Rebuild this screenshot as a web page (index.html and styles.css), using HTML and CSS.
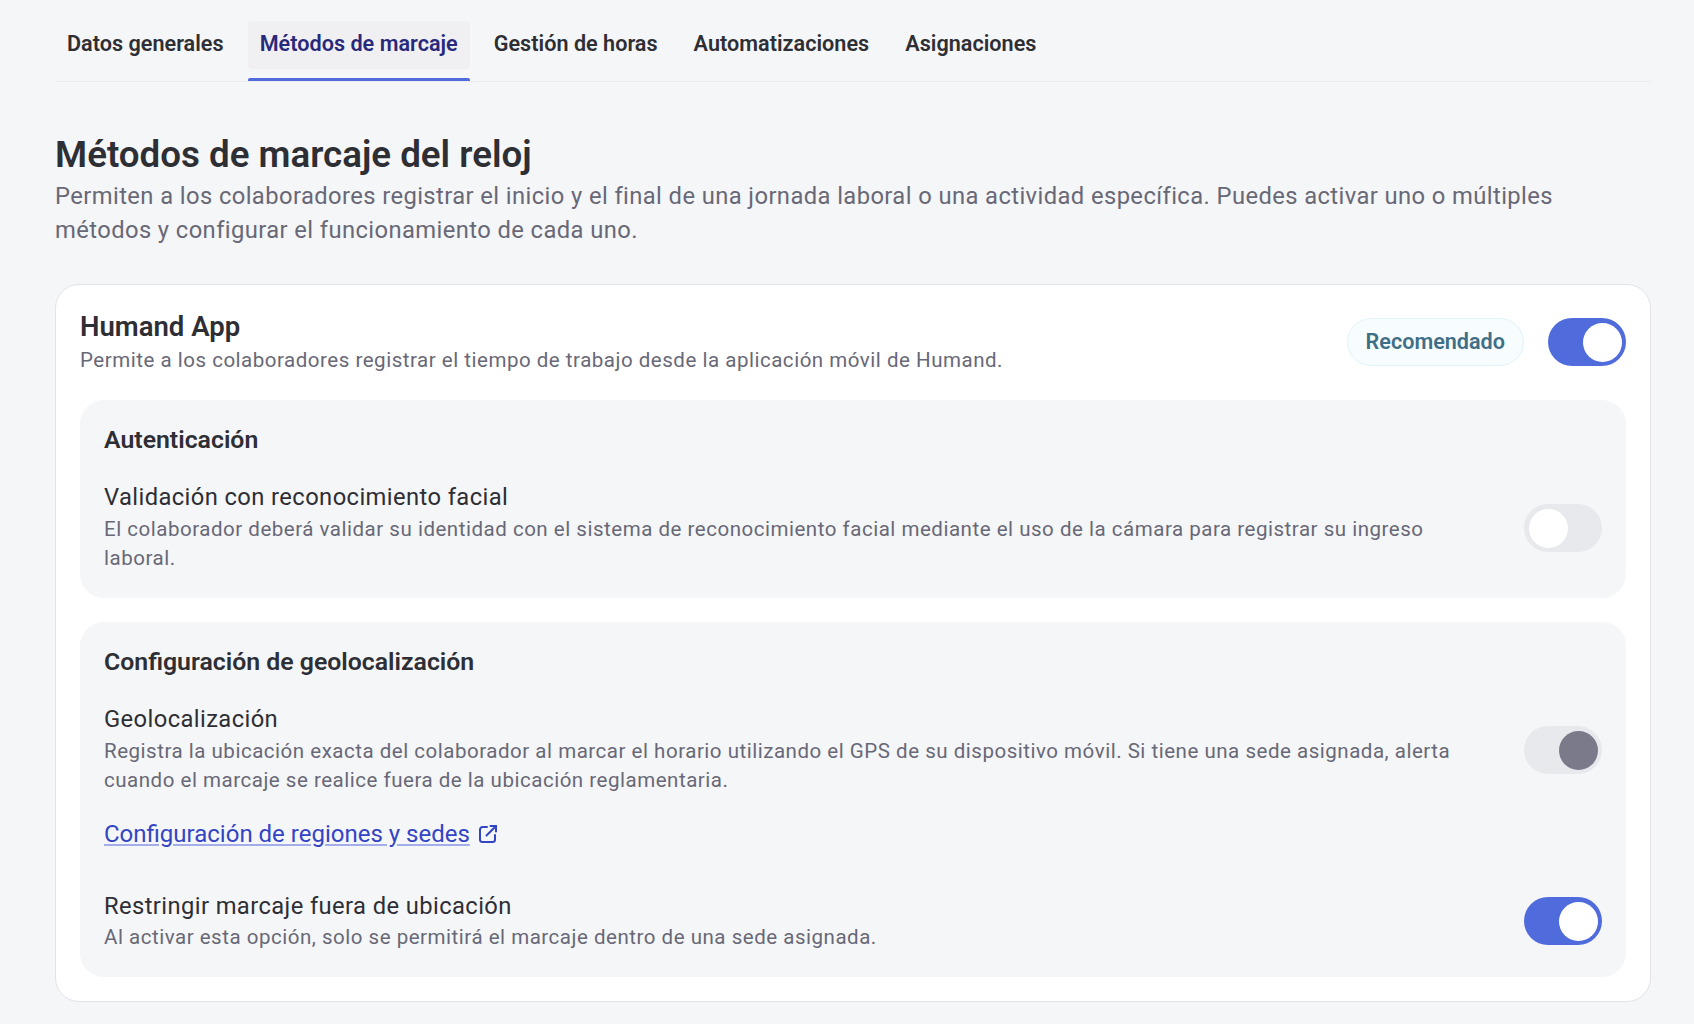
FILE: index.html
```html
<!DOCTYPE html>
<html lang="es">
<head>
<meta charset="utf-8">
<title>Métodos de marcaje</title>
<link rel="stylesheet" href="styles.css">
</head>
<body>
<main class="page">
  <nav class="tabs">
    <div class="tab"><a class="tab-label">Datos generales</a></div>
    <div class="tab tab-active"><a class="tab-label">Métodos de marcaje</a></div>
    <div class="tab"><a class="tab-label">Gestión de horas</a></div>
    <div class="tab"><a class="tab-label">Automatizaciones</a></div>
    <div class="tab"><a class="tab-label">Asignaciones</a></div>
  </nav>
  <header class="intro">
    <h1 class="title">Métodos de marcaje del reloj</h1>
    <p class="lead">Permiten a los colaboradores registrar el inicio y el final de una jornada laboral o una actividad específica. Puedes activar uno o múltiples métodos y configurar el funcionamiento de cada uno.</p>
  </header>
  <section class="card">
    <div class="card-head">
      <div class="card-head-text">
        <h2 class="card-title">Humand App</h2>
        <p class="desc">Permite a los colaboradores registrar el tiempo de trabajo desde la aplicación móvil de Humand.</p>
      </div>
      <span class="badge">Recomendado</span>
      <span class="switch switch-on"><span class="knob"></span></span>
    </div>
    <div class="panel">
      <h3 class="panel-title">Autenticación</h3>
      <div class="setting">
        <div class="setting-text">
          <div class="setting-name">Validación con reconocimiento facial</div>
          <p class="desc">El colaborador deberá validar su identidad con el sistema de reconocimiento facial mediante el uso de la cámara para registrar su ingreso laboral.</p>
        </div>
        <span class="switch"><span class="knob"></span></span>
      </div>
    </div>
    <div class="panel">
      <h3 class="panel-title">Configuración de geolocalización</h3>
      <div class="setting">
        <div class="setting-text">
          <div class="setting-name">Geolocalización</div>
          <p class="desc">Registra la ubicación exacta del colaborador al marcar el horario utilizando el GPS de su dispositivo móvil. Si tiene una sede asignada, alerta cuando el marcaje se realice fuera de la ubicación reglamentaria.</p>
        </div>
        <span class="switch switch-locked"><span class="knob"></span></span>
      </div>
      <div class="link-row">
        <a class="link">Configuración de regiones y sedes</a>
        <svg class="link-icon" viewBox="0 0 24 24" fill="none" stroke="currentColor" stroke-width="2" stroke-linecap="round" stroke-linejoin="round"><path d="M11 5H6.500A2.500 2.500 0 0 0 4 7.500v10A2.500 2.500 0 0 0 6.500 20h10a2.500 2.500 0 0 0 2.500-2.500V13"/><path d="M10.500 13.500 20 4"/><path d="M14.500 4H20v5.500"/></svg>
      </div>
      <div class="setting setting-last">
        <div class="setting-text">
          <div class="setting-name">Restringir marcaje fuera de ubicación</div>
          <p class="desc">Al activar esta opción, solo se permitirá el marcaje dentro de una sede asignada.</p>
        </div>
        <span class="switch switch-on"><span class="knob"></span></span>
      </div>
    </div>
  </section>
</main>
</body>
</html>
```
FILE: styles.css
```css
* { box-sizing: border-box; }
html, body { margin: 0; padding: 0; }
body {
  background: #f5f6f8;
  font-family: Roboto, "Liberation Sans", sans-serif;
  color: #2e2e35;
  height: 1024px;
  overflow: hidden;
}
.page { padding: 0 43px 0 55px; }
.tabs {
  display: flex;
  gap: 12px;
  padding-top: 21px;
  border-bottom: 1px solid #ebecf0;
}
.tab {
  position: relative;
  padding-bottom: 13px;
  margin-bottom: -1px;
}
.tab-label {
  display: block;
  height: 48px;
  line-height: 46.500px;
  padding: 0 12px;
  border-radius: 4px;
  font-size: 21.600px;
  letter-spacing: 0.025px;
  font-weight: 600;
  color: #2e2e35;
}
.tab-active .tab-label { background: #f0f0f3; color: #29297c; }
.tab-active::after {
  content: "";
  position: absolute;
  left: 0;
  right: 0;
  bottom: 1px;
  height: 3px;
  background: #506bdc;
  border-radius: 2px 2px 0 0;
}
.intro { padding-top: 51px; }
.title {
  margin: 0;
  font-size: 36.720px;
  line-height: 44px;
  font-weight: 600;
  color: #2e2e35;
}
.lead {
  margin: 2px 0 0;
  font-size: 23.760px;
  line-height: 34px;
  color: #686877;
  letter-spacing: 0.41px;
}
.card {
  margin-top: 37px;
  background: #fff;
  border: 1px solid #e2e3e8;
  border-radius: 24px;
  padding: 24px;
  display: flex;
  flex-direction: column;
  gap: 24px;
}
.card-head { display: flex; align-items: center; gap: 24px; margin-bottom: 1px; }
.card-head-text { flex: 1; }
.card-title { margin: 0 0 1px; font-size: 27.500px; line-height: 36px; font-weight: 600; }
.desc {
  margin: 0;
  font-size: 20.520px;
  line-height: 29px;
  color: #686877;
  letter-spacing: 0.515px;
}
.badge {
  height: 48px;
  line-height: 46px;
  padding: 0 18px;
  border: 1px solid #e3f3fa;
  background: #f7fcfe;
  border-radius: 24px;
  color: #3f6f87;
  font-size: 21.600px;
  font-weight: 600;
}
.switch {
  flex: none;
  width: 78px;
  height: 48px;
  border-radius: 24px;
  background: #e8e9ed;
  padding: 0 4px 0 5px;
  display: flex;
  align-items: center;
  justify-content: flex-start;
}
.knob {
  display: block;
  width: 39px;
  height: 39px;
  border-radius: 50%;
  background: #fff;
}
.switch-on { background: #506bdc; justify-content: flex-end; }
.switch-locked { justify-content: flex-end; }
.switch-locked .knob { background: #7b7a8b; }
.panel {
  background: #f5f6f8;
  border-radius: 24px;
  padding: 24px 24px 23px;
}
.panel-title { margin: 0 0 25px; font-size: 24.840px; line-height: 32px; font-weight: 600; }
.setting { display: flex; align-items: center; gap: 48px; }
.setting-text { flex: 1; min-width: 0; padding-bottom: 2px; }
.setting-name { font-size: 23.760px; line-height: 32px; color: #2e2e35; letter-spacing: 0.4px; margin-bottom: 2px; }
.link-row { display: flex; align-items: center; gap: 6px; margin-top: 21px; }
.link {
  font-size: 24px;
  line-height: 32px;
  color: #3344c4;
  text-decoration: underline;
  text-decoration-color: #a3adea;
}
.link-icon { width: 24px; height: 24px; color: #3344c4; }
.setting-last { margin: 40px 0 2px; }
.setting-last .setting-text { padding-bottom: 0; }
.setting-last .setting-name { margin-bottom: 1px; }
```
